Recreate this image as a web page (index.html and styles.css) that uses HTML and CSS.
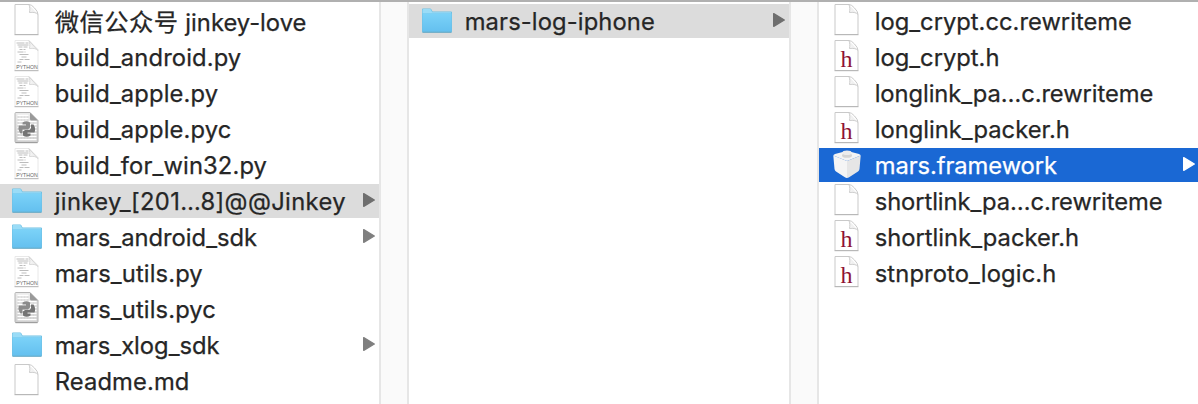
FILE: index.html
```html
<!DOCTYPE html>
<html lang="zh">
<head>
<meta charset="utf-8">
<title>Finder</title>
<link rel="stylesheet" href="styles.css">
</head>
<body>
<svg class="defs" width="0" height="0">
  <defs>
    <linearGradient id="blue" x1="0" y1="0" x2="0" y2="1"><stop offset="0" stop-color="#7bd2f8"/><stop offset="1" stop-color="#64c0ef"/></linearGradient>
    <linearGradient id="gray" x1="0" y1="0" x2="0" y2="1"><stop offset="0" stop-color="#ececec"/><stop offset="1" stop-color="#d0d0d0"/></linearGradient>
    <linearGradient id="fold" x1="0" y1="1" x2="1" y2="0"><stop offset="0" stop-color="#fff"/><stop offset="1" stop-color="#ddd"/></linearGradient>
    <symbol id="page" viewBox="-.5 .5 32 34">
      <path d="M3.500 1H17.500Q20 1 23 4.500Q26.500 8 26.500 11V31H3.500Z" fill="#fff" stroke="#c9c9c9"/>
      <path d="M3 31.200H27" stroke="#b4b4b4"/>
      <path d="M17.500 1.200C18.500 4 18.500 6 18 9C21.500 8.500 25 9 26.500 11" fill="url(#fold)" stroke="#c2c2c2" stroke-width=".8"/>
    </symbol>
    <symbol id="header" viewBox="0 0 32 34">
      <use href="#page" width="32" height="34"/>
      <text x="15.500" y="27" class="glyph">h</text>
    </symbol>
    <symbol id="py" viewBox="-.5 .5 32 34">
      <path d="M3.500 1H17.500L26.500 10V31H3.500Z" fill="#fff" stroke="#e8e8e8"/>
      <path d="M3 31.200H27" stroke="#b4b4b4"/>
      <path d="M5 3.500h8m1 0h3M6 5.500h11M7 7.500h4m1 0h4M8 10h3m1 0h2M6 12.500h6m1 0h1M8 15h9M10 17.500h5M8 20h4m1 0h5M6 22.500h4" stroke="#b4b4b4" stroke-width=".9"/>
      <path d="M17.500 1.200C18.500 4 18.500 6 18 9C21.500 8.500 25 9 26.500 11Z" fill="url(#fold)" stroke="#cecece" stroke-width=".8"/>
      <text x="15.500" y="29.600" class="tag">PYTHON</text>
    </symbol>
    <symbol id="pyc" viewBox="-.5 .5 32 34">
      <path d="M4.500 1H18.500L26.500 9V30Q26.500 31 25.500 31H4.500Q3.500 31 3.500 30V2Q3.500 1 4.500 1Z" fill="url(#gray)" stroke="#b4b4b4"/>
      <path d="M4 31.200H26" stroke="#999"/>
      <path d="M6 4h11M6 7h11M6 10h19M6 13h19M6 16h19M6 19h19M6 22h19M6 25h19M6 28h19" stroke="#fff" stroke-width="1.500"/>
      <path d="M6 5.500h11M6 8.500h11M6 11.500h19M6 14.500h19M6 17.500h19M6 20.500h19M6 23.500h19M6 26.500h19" stroke="#bbb" stroke-width=".6" stroke-dasharray="2 1"/>
      <path d="M18.500 1L26.500 9H20Q18.500 9 18.500 7.500Z" fill="#999"/>
      <path d="M11 11Q15 8.500 18.500 11V16L16.500 18H11V22H9Q6 18 7.500 14H14.500V13H11Z" fill="#8b8b8b"/>
      <path d="M19.500 13H22Q24.500 17 23 21H16V22H19V24Q15 26.500 11.500 24V20L13.500 18.500H18L19.500 17Z" fill="#747474"/>
    </symbol>
    <symbol id="folder" viewBox="0 0 32 34">
      <path d="M1 7V5.500Q1 4.500 2 4.500H9Q10 4.500 10.500 5.500L11.500 7.500H30Q31 7.500 31 8.500V27.500Q31 28.500 30 28.500H2Q1 28.500 1 27.500Z" fill="#6dbfe2"/>
      <path d="M1.500 7V6Q1.500 5 2.500 5H9Q9.700 5 10 5.700L11.200 8.300H30V9.500H1.500Z" fill="#9adcf7"/>
      <path d="M1.500 9.500H30.500V26.500Q30.500 27.500 29.500 27.500H2.500Q1.500 27.500 1.500 26.500Z" fill="url(#blue)"/>
      <path d="M1.500 28.300H30.500" stroke="#5b9fbd" stroke-width=".8"/>
    </symbol>
    <symbol id="brick" viewBox="-.5 0 32 34">
      <path d="M1.800 7.500L15.500 13V30Q14.500 30 13 29L4.500 23.500Q3.300 22.500 3 21Z" fill="#f5f5f5"/>
      <path d="M29.200 7.500L15.500 13V30Q16.500 30 18 29L26.500 23.500Q27.700 22.500 28 21Z" fill="#e6e6e6"/>
      <path d="M1.800 7.500Q2 6.500 3.500 6L13 3.500H18L27.500 6Q29 6.500 29.200 7.500L15.500 13Z" fill="#f4f4f4"/>
      <ellipse cx="15.500" cy="7.500" rx="5" ry="2.300" fill="#d4d4d4"/>
      <ellipse cx="15.500" cy="4.800" rx="4.600" ry="2.300" fill="#ececec"/>
    </symbol>
    <symbol id="arrow" viewBox="0 0 14 16">
      <path d="M1.700 1.700V14.300L12.300 8Z" fill="currentColor" stroke="currentColor" stroke-width="1.400" stroke-linejoin="round"/>
    </symbol>
  </defs>
</svg>
<main class="browser">
  <ul class="column">
    <li class="row"><svg class="icon"><use href="#page"/></svg><span class="name"><span class="han">微信公众号</span> jinkey-love</span></li>
    <li class="row"><svg class="icon"><use href="#py"/></svg><span class="name loose">build_android.py</span></li>
    <li class="row"><svg class="icon"><use href="#py"/></svg><span class="name loose">build_apple.py</span></li>
    <li class="row"><svg class="icon"><use href="#pyc"/></svg><span class="name loose">build_apple.pyc</span></li>
    <li class="row"><svg class="icon"><use href="#py"/></svg><span class="name loose">build_for_win32.py</span></li>
    <li class="row selected"><svg class="icon"><use href="#folder"/></svg><span class="name looser">jinkey_[201…8]@@Jinkey</span><svg class="arrow"><use href="#arrow"/></svg></li>
    <li class="row"><svg class="icon"><use href="#folder"/></svg><span class="name">mars_android_sdk</span><svg class="arrow"><use href="#arrow"/></svg></li>
    <li class="row"><svg class="icon"><use href="#py"/></svg><span class="name loose">mars_utils.py</span></li>
    <li class="row"><svg class="icon"><use href="#pyc"/></svg><span class="name loose">mars_utils.pyc</span></li>
    <li class="row"><svg class="icon"><use href="#folder"/></svg><span class="name">mars_xlog_sdk</span><svg class="arrow"><use href="#arrow"/></svg></li>
    <li class="row"><svg class="icon"><use href="#page"/></svg><span class="name loose">Readme.md</span></li>
  </ul>
  <div class="divider"></div>
  <ul class="column inset">
    <li class="row selected"><svg class="icon"><use href="#folder"/></svg><span class="name loose">mars-log-iphone</span><svg class="arrow"><use href="#arrow"/></svg></li>
  </ul>
  <div class="divider"></div>
  <ul class="column inset">
    <li class="row"><svg class="icon"><use href="#page"/></svg><span class="name">log_crypt.cc.rewriteme</span></li>
    <li class="row"><svg class="icon"><use href="#header"/></svg><span class="name">log_crypt.h</span></li>
    <li class="row"><svg class="icon"><use href="#page"/></svg><span class="name tight">longlink_pa…c.rewriteme</span></li>
    <li class="row"><svg class="icon"><use href="#header"/></svg><span class="name">longlink_packer.h</span></li>
    <li class="row active"><svg class="icon"><use href="#brick"/></svg><span class="name tight">mars.framework</span><svg class="arrow"><use href="#arrow"/></svg></li>
    <li class="row"><svg class="icon"><use href="#page"/></svg><span class="name tight">shortlink_pa…c.rewriteme</span></li>
    <li class="row"><svg class="icon"><use href="#header"/></svg><span class="name">shortlink_packer.h</span></li>
    <li class="row"><svg class="icon"><use href="#header"/></svg><span class="name loose">stnproto_logic.h</span></li>
  </ul>
</main>
</body>
</html>
```
FILE: styles.css
```css
* { box-sizing: border-box; }
body { margin: 0; background: #fff; color: #262626; font-family: Inter, "Noto Sans CJK SC", sans-serif; font-size: 23.75px; overflow: hidden; }
.defs { display: block; }
.browser { display: grid; grid-template-columns: 379px 30px 380px 30px 379px; height: 404px; border-top: 2px solid #b0b0b0; }
.column { list-style: none; margin: 0; padding: 2px 0 0; display: flex; flex-direction: column; gap: 2px; }
.row { display: flex; align-items: center; flex: none; height: 34px; padding: 0 3px 0 11px; }
.inset .row { padding-left: 12px; }
.icon { flex: none; width: 32px; height: 34px; margin-right: 11.7px; }
.name { flex: 1; line-height: 34px; padding-top: 2px; white-space: pre; -webkit-text-stroke: .25px currentColor; }
.loose { letter-spacing: .12px; }
.looser { letter-spacing: .36px; }
.tight { letter-spacing: -.08px; }
.han { font-size: 24.3px; letter-spacing: .5px; }
.arrow { flex: none; width: 14px; height: 16px; margin-bottom: 2px; color: #7f7f7f; }
.selected .arrow { color: #6e6e6e; }
.selected { background: #dcdcdc; }
.active { background: #1a68d4; color: #fff; }
.inset .active { padding-right: 2px; }
.active .arrow { color: #fff; }
.divider { background: #fafafa; border: solid #e6e6e6; border-width: 0 2px; }
.glyph { font: 24px "Liberation Serif", serif; fill: #8e1232; text-anchor: middle; }
.tag { font: 5.2px "Liberation Sans", sans-serif; fill: #666; text-anchor: middle; }
```
